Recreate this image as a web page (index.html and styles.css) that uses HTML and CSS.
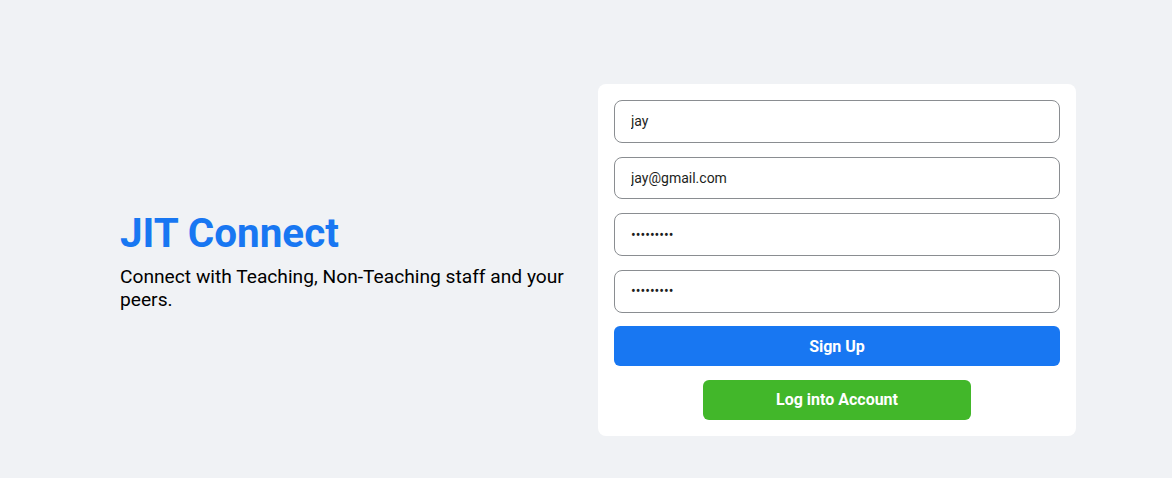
FILE: index.html
```html
<!DOCTYPE html>
<html lang="en">
<head>
<meta charset="utf-8">
<title>JIT Connect - Sign Up</title>
<link rel="stylesheet" href="styles.css">
</head>
<body>
<main class="page">
  <div class="container">
    <section class="intro">
      <h1 class="brand">JIT Connect</h1>
      <p class="tagline">Connect with Teaching, Non-Teaching staff and your peers.</p>
    </section>
    <section class="card">
      <form class="form">
        <input class="field" type="text" value="jay">
        <input class="field" type="email" value="jay@gmail.com">
        <input class="field" type="password" value="123456789">
        <input class="field" type="password" value="123456789">
        <button class="btn btn-primary" type="button">Sign Up</button>
        <button class="btn btn-secondary" type="button">Log into Account</button>
      </form>
    </section>
  </div>
</main>
</body>
</html>
```

FILE: styles.css
```css
* { box-sizing: border-box; }

html, body {
  margin: 0;
  padding: 0;
  background: #f0f2f5;
  font-family: Roboto, "Liberation Sans", Arial, sans-serif;
  color: #000;
}

.page {
  min-height: 478px;
  padding-top: 84px;
}

.container {
  width: 980px;
  margin: 0 auto;
  display: flex;
  align-items: center;
}

.intro {
  flex: 1;
  padding: 0 24px;
}

.brand {
  margin: 0;
  font-size: 40.4px;
  font-weight: 700;
  color: #1877f2;
  line-height: 48px;
}

.tagline {
  margin: 7px 0 -2px;
  font-size: 19.2px;
  line-height: 23.5px;
  color: #000;
}

.card {
  width: 478px;
  background: #fff;
  border-radius: 8px;
  padding: 16px;
}

.form {
  display: flex;
  flex-direction: column;
  align-items: center;
}

.field {
  width: 100%;
  height: 42.67px;
  border: 1px solid #8a8d91;
  border-radius: 8px;
  padding: 0 16px;
  font-family: Roboto, "Liberation Sans", Arial, sans-serif;
  font-size: 14px;
  color: #1c1e21;
  background: #fff;
  margin-bottom: 14px;
  outline: none;
}

.btn {
  border: none;
  color: #fff;
  font-family: Roboto, "Liberation Sans", Arial, sans-serif;
  font-weight: 700;
  font-size: 16px;
  height: 40px;
  border-radius: 6px;
  cursor: pointer;
}

.btn-primary {
  width: 100%;
  background: #1877f2;
  margin-top: -0.67px;
  padding-top: 2px;
}

.btn-secondary {
  width: 268px;
  background: #42b72a;
  margin-top: 14px;
}
```
